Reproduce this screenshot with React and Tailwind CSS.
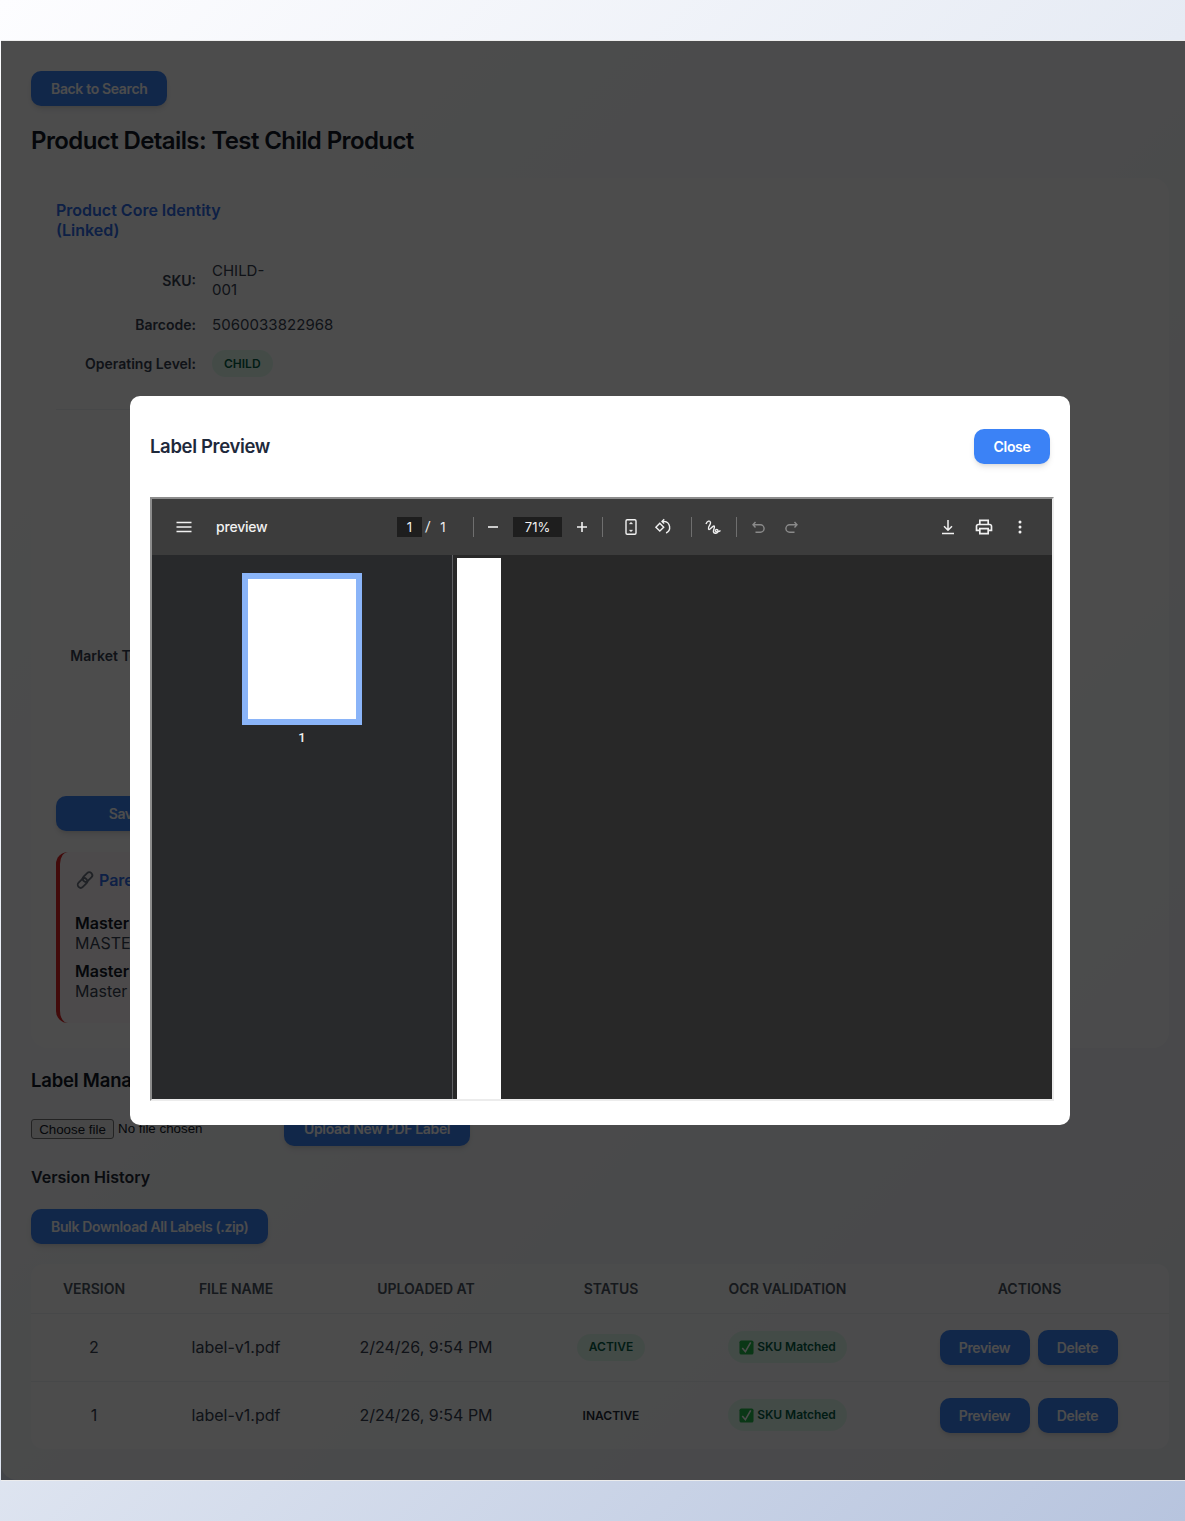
const primaryBtn = 'rounded-[10px] bg-[#3b82f6] text-[14px] font-semibold tracking-[-0.35px] text-white shadow-md h-[35px] px-5';

function Field({ label, children, className = '' }) {
  return (
    <div className={`flex items-center gap-4 ${className}`}>
      <span className="w-[140px] shrink-0 text-right text-[14px] font-semibold text-[#374151]">{label}</span>
      {children}
    </div>
  );
}

function SkuBadge() {
  return (
    <span className="inline-flex h-[32px] items-center gap-[3px] rounded-full bg-[#d1fae5]/60 px-[11px] text-[12px] font-semibold tracking-[-0.05px] text-[#065f46]">
      <svg viewBox="0 0 16 16" className="h-[15px] w-[15px]">
        <rect x="0.5" y="0.5" width="15" height="15" rx="2" fill="#22b84a" />
        <path d="M3.5 8.5 L6.8 12.5 L12.5 2.5" fill="none" stroke="#ffffff" strokeWidth="1.7" />
      </svg>
      SKU Matched
    </span>
  );
}

function VersionRow({ version, status, active }) {
  return (
    <tr className="h-[68px] border-t border-[#e5e7eb]/60 text-center text-[16px] text-[#374151]">
      <td>{version}</td>
      <td>label-v1.pdf</td>
      <td>2/24/26, 9:54 PM</td>
      <td>
        <span className={`inline-flex h-[27px] items-center rounded-full text-[12px] font-semibold ${active ? 'bg-[#d1fae5]/60 px-3 text-[#065f46]' : 'text-[#1f2937]'}`}>
          {status}
        </span>
      </td>
      <td><SkuBadge /></td>
      <td>
        <div className="flex justify-center gap-2 pr-[2px]">
          <button className={`${primaryBtn} w-[90px] !px-0`}>Preview</button>
          <button className={`${primaryBtn} w-[80px] !px-0`}>Delete</button>
        </div>
      </td>
    </tr>
  );
}

function ToolIcon({ className = 'w-[32px]', dim, children }) {
  return (
    <div className={`flex h-[32px] shrink-0 items-center justify-center ${dim ? 'text-[#8a8a8a]' : 'text-[#f1f1f1]'} ${className}`}>
      <svg viewBox="0 0 20 20" className="h-[20px] w-[20px]" fill="none" stroke="currentColor" strokeWidth="1.4">
        {children}
      </svg>
    </div>
  );
}

function Sep({ className = '' }) {
  return <div className={`h-[20px] w-px shrink-0 bg-[#6f6f6f] ${className}`} />;
}

function PdfViewer() {
  return (
    <div className="h-[604px] w-[904px] border-2 border-t-[#8c8c8c] border-l-[#8c8c8c] border-r-[#ececec] border-b-[#ececec] bg-[#282828] flex flex-col font-['Roboto',sans-serif]">
      {/* toolbar */}
      <div className="flex h-[56px] shrink-0 items-center bg-[#3c3c3c] text-[14px] text-[#f1f1f1]">
        <ToolIcon className="ml-[16px] w-[32px]">
          <path d="M2.5 5.5h15M2.5 10h15M2.5 14.5h15" />
        </ToolIcon>
        <span className="ml-[16px] w-[51px] font-['Inter',sans-serif] font-medium tracking-[-0.2px] leading-[18px] -mt-px">preview</span>
        <div className="ml-[130px] flex h-[20px] w-[25px] items-center justify-center bg-[#1e1e1e] pt-px font-['Inter',sans-serif] text-[13px]">1</div>
        <span className="w-[12px] text-center">/</span>
        <span className="w-[18px] pt-px text-center font-['Inter',sans-serif] text-[13px]">1</span>
        <Sep className="ml-[21px]" />
        <ToolIcon className="w-[38px]"><path d="M5 10h10" strokeWidth="1.6" /></ToolIcon>
        <div className="ml-px flex h-[20px] w-[49px] items-center justify-center bg-[#1e1e1e] pt-px font-['Inter',sans-serif] text-[13px]">71%</div>
        <ToolIcon className="w-[40px]"><path d="M5 10h10M10 5v10" strokeWidth="1.6" /></ToolIcon>
        <Sep />
        <ToolIcon className="ml-[12px] w-[32px]">
          <rect x="5" y="2.8" width="10" height="14.4" rx="1.2" />
          <path d="M8.6 7.2 10 5.8l1.4 1.4M8.6 12.8l1.4 1.4 1.4-1.4" strokeWidth="1.2" />
        </ToolIcon>
        <ToolIcon>
          <path d="M6.8 6.3 2.9 10.2l3.9 3.9 3.9-3.9z" />
          <path d="M9 4.4h2.2a6.1 6.1 0 0 1 1.9 11.6" />
          <path d="M11.2 2.2 9 4.4l2.2 2.2" />
        </ToolIcon>
        <Sep className="ml-[12px]" />
        <ToolIcon className="w-[42px]">
          <path d="M3 7C4 4 7 3 7.5 5.500 8 8 4.500 9.500 5.500 12 6.500 14 9.500 8.500 11 9 12.500 9.500 10 13 10.500 15 11 17 15 16.500 15 14 15 12 12 12 12.500 14 13 15.500 16 15 17.500 13.500" />
        </ToolIcon>
        <Sep className="ml-[2px]" />
        <ToolIcon dim className="ml-[6px] w-[32px]">
          <path d="M6.5 5 4 7.800l2.500 2.600M4 7.800h7.400a3.600 3.600 0 0 1 0 7.400H6.500" />
        </ToolIcon>
        <ToolIcon dim>
          <path d="M13.500 5 16 7.800l-2.500 2.600M16 7.800H8.600a3.600 3.600 0 0 0 0 7.400h4.900" />
        </ToolIcon>
        <div className="ml-auto flex items-center mr-[14px]">
          <ToolIcon className="w-[36px]">
            <path d="M10 3v10M6 9.200l4 4 4-4M4 16.500h12" strokeWidth="1.5" />
          </ToolIcon>
          <div className="flex h-[32px] w-[36px] items-center justify-center text-[#f1f1f1]">
            <svg viewBox="0 0 24 24" className="h-[20px] w-[20px]" fill="currentColor">
              <path d="M19 8h-1V3H6v5H5c-1.66 0-3 1.34-3 3v6h4v4h12v-4h4v-6c0-1.66-1.34-3-3-3zM8 5h8v3H8V5zm8 14H8v-4h8v4zm2-4v-2H6v2H4v-4c0-.55.45-1 1-1h14c.55 0 1 .45 1 1v4h-2z" />
            </svg>
          </div>
          <div className="flex h-[32px] w-[36px] items-center justify-center text-[#f1f1f1]">
            <svg viewBox="0 0 20 20" className="h-[20px] w-[20px]" fill="currentColor">
              <circle cx="10" cy="5" r="1.5" />
              <circle cx="10" cy="10" r="1.5" />
              <circle cx="10" cy="15" r="1.5" />
            </svg>
          </div>
        </div>
      </div>

      <div className="flex min-h-0 flex-1">
        {/* thumbnails */}
        <div className="flex w-[300px] shrink-0 flex-col items-center bg-[#28292b] pt-[18px]">
          <div className="h-[152px] w-[120px] border-[6px] border-[#8ab4f8] bg-white" />
          <span className="mt-[3px] text-[13px] font-medium text-[#f1f1f1]">1</span>
        </div>
        <div className="w-px shrink-0 bg-[#5f6063]" />
        {/* page */}
        <div className="min-w-0 flex-1 pl-[4px] pt-[3px]">
          <div className="h-full w-[44px] bg-white" />
        </div>
      </div>
    </div>
  );
}

export default function App() {
  return (
    <div className="min-h-[1521px] overflow-hidden bg-[linear-gradient(135deg,#fdfdff_0%,#e6ebf4_45%,#b7c4de_100%)] pt-[41px] font-['Inter',sans-serif]">
      <div className="relative ml-px h-[1439px] w-[1198px]">
        <div className="h-full rounded-[16px] bg-white/80 p-[30px]">
          <button className={primaryBtn}>Back to Search</button>
          <h1 className="mt-[19px] text-[24px] font-semibold leading-[32px] tracking-[-0.6px] text-[#111827]">Product Details: Test Child Product</h1>

          {/* core identity card */}
          <div className="mt-[21px] h-[870px] rounded-[16px] bg-white/70 px-[25px] pt-[22px]">
            <h2 className="w-[190px] text-[16px] font-semibold leading-[20px] text-[#2f6be8]">Product Core Identity (Linked)</h2>
            <Field label="SKU:" className="mt-[21px]">
              <span className="w-[60px] text-[15px] leading-[19px] text-[#374151]">CHILD-001</span>
            </Field>
            <Field label="Barcode:" className="mt-[15px]">
              <span className="text-[15px] leading-[19px] tracking-[0.05px] text-[#374151]">5060033822968</span>
            </Field>
            <Field label="Operating Level:" className="mt-[15px]">
              <span className="inline-flex h-[27px] items-center rounded-full bg-[#d1fae5]/60 px-3 text-[12px] font-semibold text-[#065f46]">CHILD</span>
            </Field>
            <div className="mt-[32px] h-px w-[400px] bg-[#e5e7eb]/60" />
            <Field label="Market Territories:" className="mt-[235px]">
              <span />
            </Field>
            <button className={`${primaryBtn} mt-[130px] block w-[198px]`}>Save Changes</button>

            {/* parent link panel */}
            <div className="mt-[21px] h-[171px] w-[500px] rounded-[12px] border-l-[4px] border-[#dc2626] bg-[#fef2f2]/40 pl-[15px] pt-[16px] text-[16px] text-[#374151]">
              <div className="flex items-center gap-[4px] text-[16px] font-semibold text-[#2f6be8]">
                <svg viewBox="0 0 20 20" className="h-[20px] w-[20px]" fill="none" stroke="#6b7280" strokeWidth="1.8">
                  <rect x="9.500" y="1.500" width="6" height="11" rx="3" transform="rotate(45 12.500 7)" />
                  <rect x="4.500" y="7.500" width="6" height="11" rx="3" transform="rotate(45 7.500 13)" />
                </svg>
                Parent Master Product
              </div>
              <div className="mt-[21px] leading-[20px]">
                <div className="font-semibold text-[#111827]">Master SKU:</div>
                <div>MASTER-001</div>
              </div>
              <div className="mt-[8px] leading-[20px]">
                <div className="font-semibold text-[#111827]">Master Name:</div>
                <div>Master Product</div>
              </div>
            </div>
          </div>

          <h3 className="mt-[20px] text-[18.5px] font-semibold leading-[24px] tracking-[-0.2px] text-[#111827]">Label Management</h3>
          <div className="mt-[19px] flex items-center">
            <div className="flex w-[253px] items-center font-['Liberation_Sans',sans-serif] text-[13.33px] text-[#111827]">
              <button className="h-[20px] w-[83px] rounded-[3px] border border-[#767676] bg-[#efefef]">Choose file</button>
              <span className="ml-1">No file chosen</span>
            </div>
            <button className={primaryBtn}>Upload New PDF Label</button>
          </div>
          <h4 className="mt-[20px] text-[16px] font-semibold leading-[22px] text-[#1f2937]">Version History</h4>
          <button className={`${primaryBtn} mt-[21px] block`}>Bulk Download All Labels (.zip)</button>

          {/* version table */}
          <div className="mt-[20px] rounded-[12px] bg-white/70">
            <table className="w-full table-fixed border-collapse">
              <colgroup>
                <col className="w-[126px]" />
                <col className="w-[158px]" />
                <col className="w-[222px]" />
                <col className="w-[148px]" />
                <col className="w-[205px]" />
                <col />
              </colgroup>
              <thead>
                <tr className="h-[49px] text-center text-[14px] text-[#4b5563]">
                  <th className="font-semibold">VERSION</th>
                  <th className="font-semibold">FILE NAME</th>
                  <th className="font-semibold">UPLOADED AT</th>
                  <th className="font-semibold">STATUS</th>
                  <th className="font-semibold">OCR VALIDATION</th>
                  <th className="font-semibold">ACTIONS</th>
                </tr>
              </thead>
              <tbody>
                <VersionRow version="2" status="ACTIVE" active />
                <VersionRow version="1" status="INACTIVE" />
              </tbody>
            </table>
          </div>
        </div>

        {/* modal */}
        <div className="absolute inset-x-0 -inset-y-px flex items-center justify-center border-y border-white/90 bg-black/70">
          <div className="h-[729px] w-[940px] rounded-[10px] bg-white px-[20px] pt-[33px]">
            <div className="flex h-[35px] items-center justify-between">
              <h2 className="text-[18.5px] font-semibold tracking-[-0.35px] text-[#1e293b]">Label Preview</h2>
              <button className="h-[35px] w-[76px] rounded-[10px] bg-[#3b82f6] text-[14px] font-semibold tracking-[-0.3px] text-white shadow-md">Close</button>
            </div>
            <div className="mt-[33px]">
              <PdfViewer />
            </div>
          </div>
        </div>
      </div>
    </div>
  );
}
